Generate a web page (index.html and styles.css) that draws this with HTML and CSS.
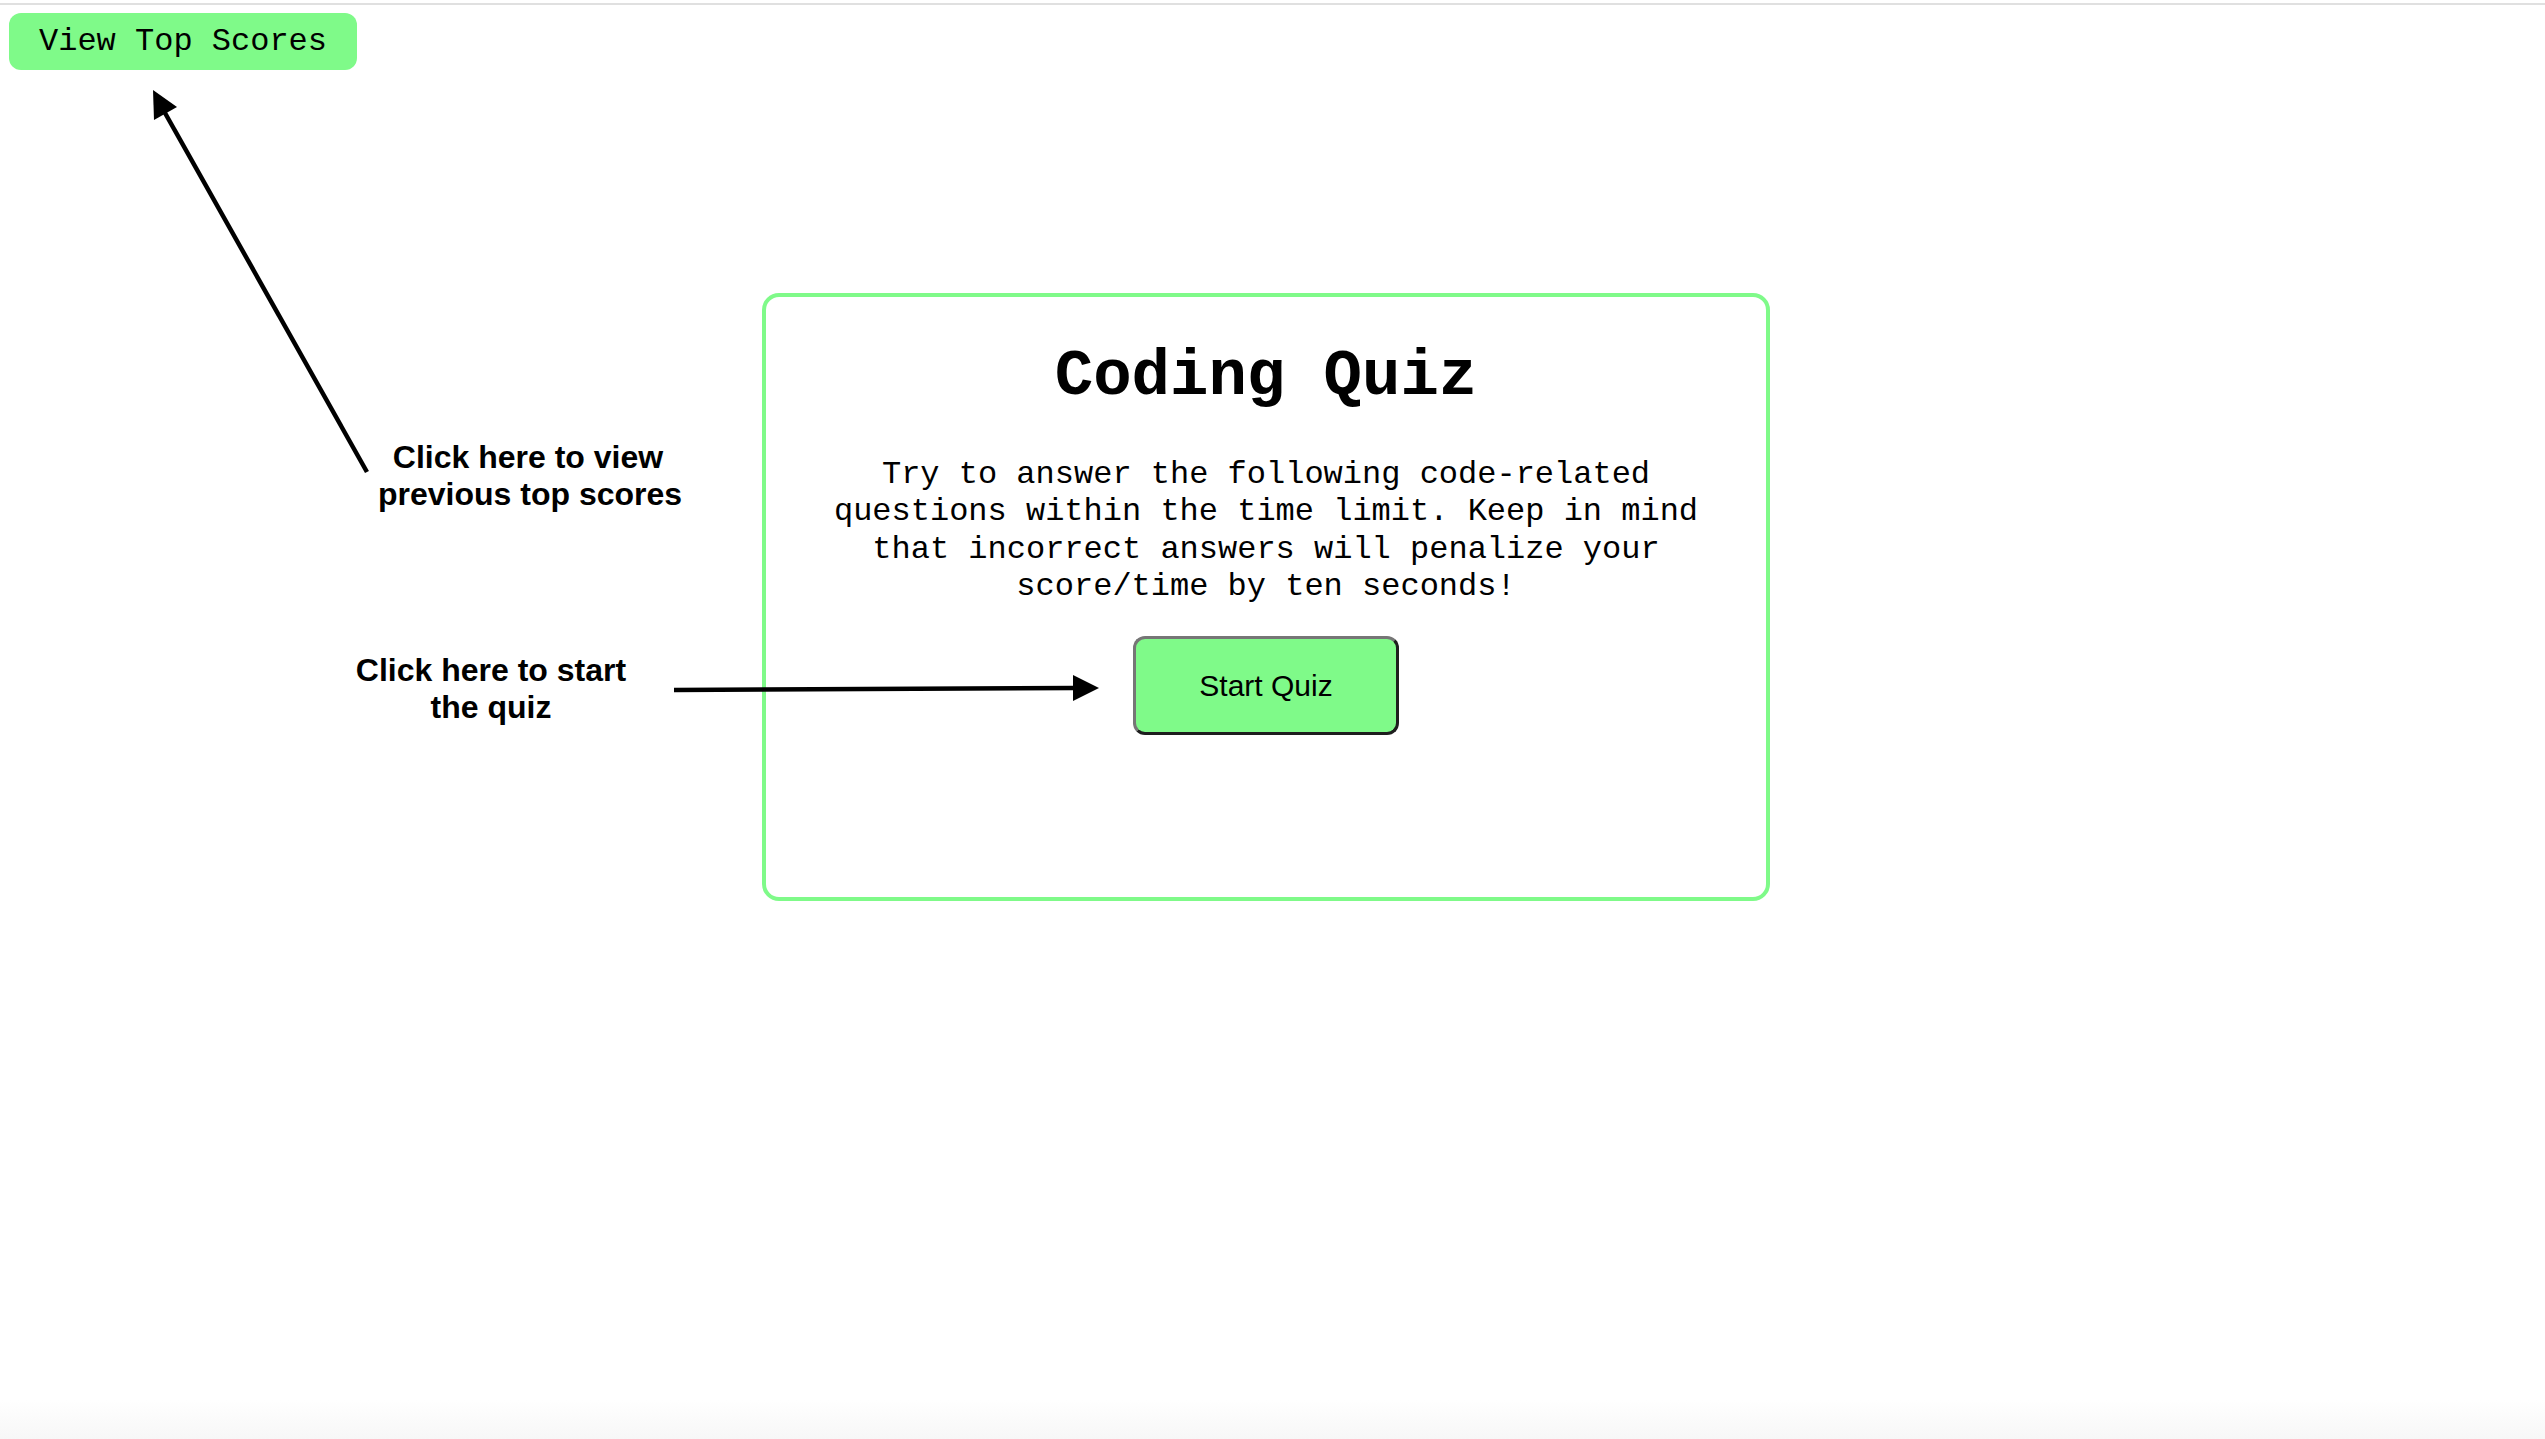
FILE: index.html
```html
<!DOCTYPE html>
<html lang="en">
<head>
<meta charset="utf-8">
<title>Coding Quiz</title>
<link rel="stylesheet" href="styles.css">
</head>
<body>
<div class="topline"></div>
<div class="page">
  <header class="header">
    <button class="scores-btn">View Top Scores</button>
  </header>
  <main class="card">
    <h1 class="title">Coding Quiz</h1>
    <p class="intro">Try to answer the following code-related questions within the time limit. Keep in mind that incorrect answers will penalize your score/time by ten seconds!</p>
    <button class="start-btn">Start Quiz</button>
  </main>

  <div class="note note-scores">Click here to view<br>previous top scores</div>
  <div class="note note-start">Click here to start<br>the quiz</div>

  <svg class="arrows" width="1200" height="760" viewBox="0 0 1200 760" aria-hidden="true">
    <line x1="367" y1="472" x2="160" y2="104" stroke="#000" stroke-width="4.5"/>
    <polygon points="153,90 154,120 177,107" fill="#000"/>
    <line x1="674" y1="690" x2="1075" y2="688" stroke="#000" stroke-width="4.5"/>
    <polygon points="1073,675 1099,688 1073,701" fill="#000"/>
  </svg>
</div>
</body>
</html>
```

FILE: styles.css
```css
html {
  min-height: 100%;
  background: linear-gradient(to bottom, #ffffff 1400px, #f7f7f7 1439px);
}

body {
  margin: 0;
  font-family: "Liberation Mono", "Courier New", monospace;
  color: #000;
}

.topline {
  height: 2px;
  margin-top: 3px;
  background: #e0e0e0;
}

.page {
  position: relative;
}

.header {
  padding: 8px 0 0 9px;
}

.scores-btn {
  display: block;
  width: 348px;
  height: 57px;
  margin: 0;
  padding: 0;
  border: none;
  border-radius: 12px;
  background: #7ffa89;
  font-family: "Liberation Mono", "Courier New", monospace;
  font-size: 32px;
  color: #000;
  text-align: center;
  line-height: 57px;
}

.card {
  box-sizing: border-box;
  width: 1008px;
  height: 608px;
  margin: 223px 0 0 762px;
  padding-top: 44px;
  border: 4px solid #7ffa89;
  border-radius: 17px;
  display: flex;
  flex-direction: column;
  align-items: center;
}

.title {
  margin: 0;
  font-size: 64px;
  font-weight: bold;
  line-height: 72px;
  text-align: center;
}

.intro {
  width: 880px;
  margin: 43px 0 0;
  font-size: 32px;
  line-height: 37.3px;
  text-align: center;
}

.start-btn {
  box-sizing: border-box;
  width: 266px;
  height: 99px;
  margin-top: 31px;
  padding: 0;
  border: 3px solid;
  border-color: #767676 #1e1e1e #1e1e1e #767676;
  border-radius: 12px;
  background: #7ffa89;
  font-family: "Liberation Sans", Arial, sans-serif;
  font-size: 30px;
  color: #000;
}

.note {
  position: absolute;
  font-family: "Liberation Sans", Arial, sans-serif;
  font-weight: bold;
  font-size: 32px;
  line-height: 37px;
  text-align: center;
  white-space: nowrap;
}

.note-scores {
  left: 378px;
  top: 434px;
  width: 300px;
}

.note-start {
  left: 341px;
  top: 647px;
  width: 300px;
}

.arrows {
  position: absolute;
  left: 0;
  top: -5px;
  pointer-events: none;
}
```
